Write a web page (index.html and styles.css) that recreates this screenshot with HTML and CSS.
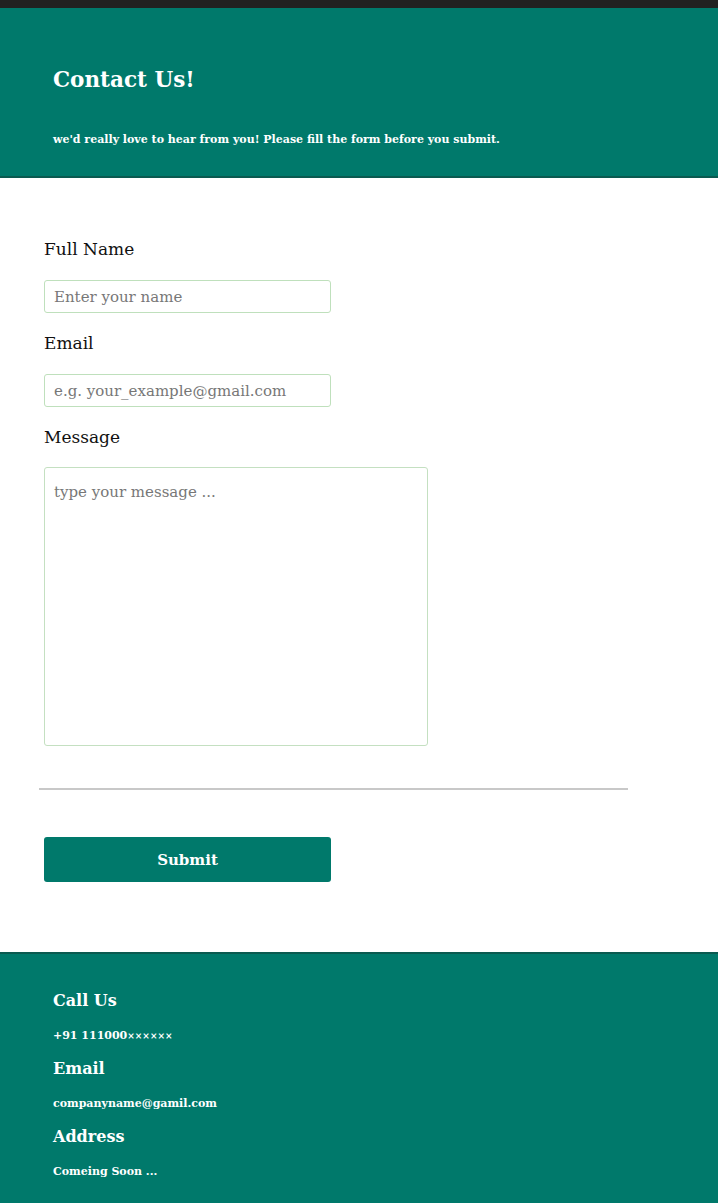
FILE: index.html
```html
<!DOCTYPE html>
<html lang="en">
<head>
<meta charset="utf-8">
<title>Contact Us</title>
<link rel="stylesheet" href="styles.css">
</head>
<body>
<div class="topbar"></div>
<header class="hero">
  <h1 class="hero-title">Contact Us!</h1>
  <p class="hero-sub">we'd really love to hear from you! Please fill the form before you submit.</p>
</header>
<main class="form-wrap">
  <form class="form">
    <label class="label" for="name">Full Name</label>
    <input class="field" id="name" type="text" placeholder="Enter your name">
    <label class="label" for="email">Email</label>
    <input class="field" id="email" type="email" placeholder="e.g. your_example@gmail.com">
    <label class="label" for="msg">Message</label>
    <textarea class="area" id="msg" placeholder="type your message ..."></textarea>
    <hr class="rule">
    <button class="submit" type="button">Submit</button>
  </form>
</main>
<footer class="foot">
  <h3 class="foot-h">Call Us</h3>
  <p class="foot-p">+91 111000<span class="mask">××××××</span></p>
  <h3 class="foot-h">Email</h3>
  <p class="foot-p">companyname@gamil.com</p>
  <h3 class="foot-h">Address</h3>
  <p class="foot-p">Comeing Soon ...</p>
</footer>
</body>
</html>
```

FILE: styles.css
```css
html, body {
  margin: 0;
  padding: 0;
  background: #ffffff;
  font-family: "DejaVu Serif", "Liberation Serif", serif;
}
.topbar {
  height: 8px;
  background: #212121;
}
.hero {
  background: #00796b;
  color: #ffffff;
  height: 170px;
  box-sizing: border-box;
  padding: 57px 0 0 53px;
  border-bottom: 2px solid #0a5a50;
}
.hero-title {
  margin: 0;
  font-size: 21.5px;
  line-height: 30px;
  font-weight: bold;
}
.hero-sub {
  margin: 38px 0 0;
  font-size: 11px;
  line-height: 14px;
  font-weight: bold;
}
.form-wrap {
  padding: 59px 0 70px 44px;
}
.form {
  display: flex;
  flex-direction: column;
  align-items: flex-start;
}
.label {
  font-size: 17px;
  line-height: 24px;
  color: #111111;
}
.field {
  margin-top: 19px;
  margin-bottom: 18px;
  width: 287px;
  height: 33px;
  box-sizing: border-box;
  border: 1px solid #bfe0bc;
  border-radius: 3px;
  padding: 0 9px;
  font-family: inherit;
  font-size: 15px;
  line-height: normal;
  color: #333;
}
.field::placeholder, .area::placeholder {
  color: #777777;
}
.area {
  margin-top: 18px;
  width: 384px;
  height: 279px;
  box-sizing: border-box;
  border: 1px solid #c4e0c1;
  border-radius: 3px;
  padding: 15px 9px;
  font-family: inherit;
  font-size: 15px;
  resize: none;
}
.rule {
  margin: 42px 0 0 -5px;
  width: 589px;
  border: 0;
  height: 2px;
  background: #c8c8c8;
}
.submit {
  margin-top: 47px;
  width: 287px;
  height: 45px;
  border: 0;
  border-radius: 3px;
  background: #00796b;
  color: #ffffff;
  font-family: inherit;
  font-size: 15px;
  font-weight: bold;
}
.foot {
  background: #00796b;
  color: #ffffff;
  border-top: 2px solid #0a5a50;
  padding: 34px 0 10px 53px;
  min-height: 251px;
  box-sizing: border-box;
}
.foot-h {
  margin: 0;
  font-size: 16px;
  line-height: 26px;
  font-weight: bold;
}
.foot-p {
  margin: 15px 0 13px;
  font-size: 11px;
  line-height: 14px;
  font-weight: bold;
}
.mask {
  font-size: 9px;
}
```
